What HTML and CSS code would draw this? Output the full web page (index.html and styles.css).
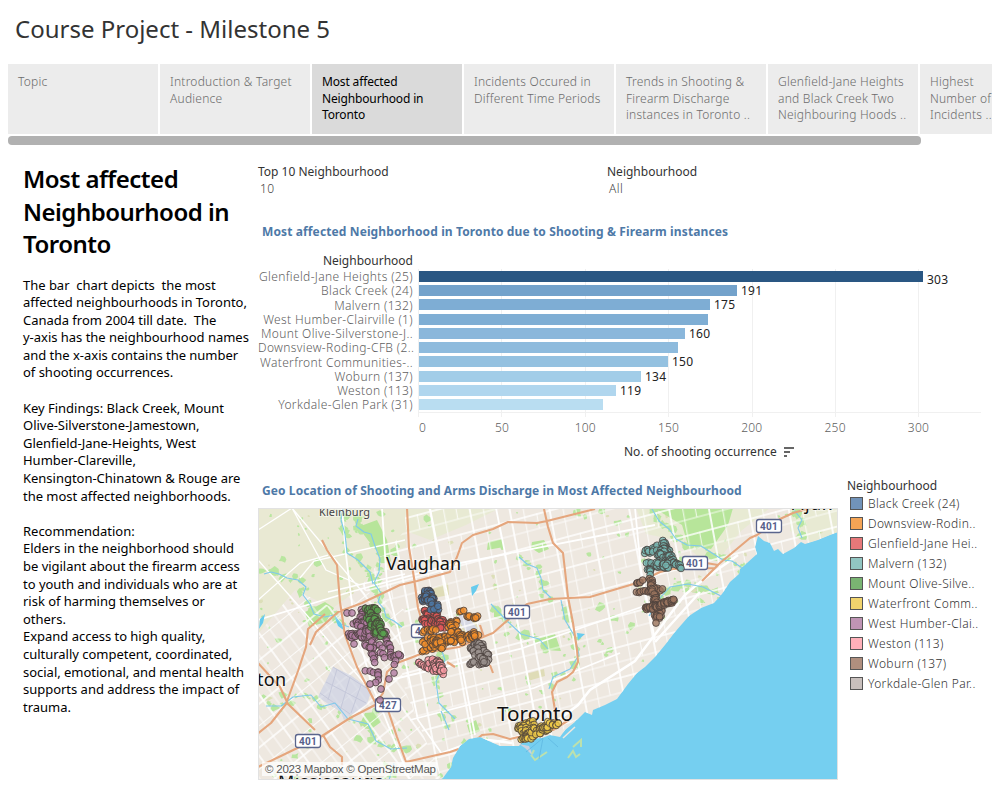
FILE: index.html
```html
<!DOCTYPE html>
<html lang="en">
<head>
<meta charset="utf-8">
<title>Course Project - Milestone 5</title>
<link rel="stylesheet" href="styles.css">
</head>
<body>
<h1 class="title">Course Project - Milestone 5</h1>
<nav class="tabs">
<div class="tab">Topic</div>
<div class="tab">Introduction &amp; Target<br>Audience</div>
<div class="tab active">Most affected<br>Neighbourhood in<br>Toronto</div>
<div class="tab">Incidents Occured in<br>Different Time Periods</div>
<div class="tab">Trends in Shooting &amp;<br>Firearm Discharge<br>instances in Toronto ..</div>
<div class="tab">Glenfield-Jane Heights<br>and Black Creek Two<br>Neighbouring Hoods ..</div>
<div class="tab">Highest<br>Number of<br>Incidents ..</div>
</nav>
<div class="scrollbar"></div>
<main class="main">
<aside class="story">
<h2>Most affected<br>Neighbourhood in<br>Toronto</h2>
<p>The bar  chart depicts  the most
affected neighbourhoods in Toronto,
Canada from 2004 till date.  The
y-axis has the neighbourhood names
and the x-axis contains the number
of shooting occurrences.

Key Findings: Black Creek, Mount
Olive-Silverstone-Jamestown,
Glenfield-Jane-Heights, West
Humber-Clareville,
Kensington-Chinatown &amp; Rouge are
the most affected neighborhoods.

Recommendation:
Elders in the neighborhood should
be vigilant about the firearm access
to youth and individuals who are at
risk of harming themselves or
others.
Expand access to high quality,
culturally competent, coordinated,
social, emotional, and mental health
supports and address the impact of
trauma.</p>
</aside>
<section class="content">
<div class="filters">
<div class="filter"><b>Top 10 Neighbourhood</b><span>10</span></div>
<div class="filter"><b>Neighbourhood</b><span>All</span></div>
</div>
<h3 class="bar-title">Most affected Neighborhood in Toronto due to Shooting &amp; Firearm instances</h3>
<div class="chart">
<div class="names"><div class="names-head">Neighbourhood</div><div class="name">Glenfield-Jane Heights (25)</div><div class="name">Black Creek (24)</div><div class="name">Malvern (132)</div><div class="name">West Humber-Clairville (1)</div><div class="name">Mount Olive-Silverstone-J..</div><div class="name">Downsview-Roding-CFB (2..</div><div class="name">Waterfront Communities-..</div><div class="name">Woburn (137)</div><div class="name">Weston (113)</div><div class="name">Yorkdale-Glen Park (31)</div></div>
<div class="plot-col">
<svg class="plot" width="563" height="149" viewBox="418 269 563 149">
<path class="grid" d="M418.5 269v148M501.5 269v148M585.5 269v148M668.5 269v148M752.5 269v148M835.5 269v148M918.5 269v148M418 412.5h563"/>
<g class="bars">
<rect x="419" y="271" width="504" height="11" fill="#2a5783"/>
<rect x="419" y="285" width="318" height="11" fill="#73a2cb"/>
<rect x="419" y="299" width="291" height="11" fill="#7eadd4"/>
<rect x="419" y="314" width="289" height="11" fill="#7faed4"/>
<rect x="419" y="328" width="266" height="11" fill="#8ab7db"/>
<rect x="419" y="342" width="259" height="11" fill="#8ebbdd"/>
<rect x="419" y="356" width="249" height="11" fill="#94c1e0"/>
<rect x="419" y="371" width="222" height="11" fill="#a2cde8"/>
<rect x="419" y="385" width="197" height="11" fill="#b0d6ee"/>
<rect x="419" y="399" width="184" height="11" fill="#b9ddf1"/>
</g>
<g class="values"><text x="927" y="284">303</text><text x="741" y="295">191</text><text x="714" y="309">175</text><text x="689" y="338">160</text><text x="672" y="366">150</text><text x="645" y="381">134</text><text x="620" y="395">119</text></g>
</svg>
<div class="ticks"><span>0</span><span>50</span><span>100</span><span>150</span><span>200</span><span>250</span><span>300</span></div>
<div class="axis"><span>No. of shooting occurrence</span><svg width="11" height="10"><path d="M0 0h10v2H0zM0 4h6v2H0zM0 8h3v2H0z" fill="#666"/></svg></div>
</div>
</div>
<div class="lower">
<div>
<h3 class="map-title">Geo Location of Shooting and Arms Discharge in Most Affected Neighbourhood</h3>
<svg class="map" width="580" height="272" viewBox="258 508 580 272">
<defs>
<pattern id="east" width="38" height="31" patternUnits="userSpaceOnUse" patternTransform="translate(440 570) skewY(-15) skewX(10)"><path d="M0 1H38M1 0V31" stroke="#fff" stroke-width="1.6"/><path d="M0 16H38M14 0V31M26 0V16" stroke="#fff" stroke-width=".8"/></pattern>
<pattern id="west" width="36" height="34" patternUnits="userSpaceOnUse" patternTransform="translate(270 650) rotate(-39) skewX(-3)"><path d="M0 1H36M1 0V34" stroke="#fff" stroke-width="1.5"/><path d="M0 18H36M12 0V34M24 0V34" stroke="#fff" stroke-width=".8"/></pattern>
<clipPath id="land"><path id="coast" d="M258 508H838V532L830 535 818 540 805 544 801 542 794 548 783 554 778 549 774 551 770 543 764 541 758 536 755 547 757 554 747 563 740 569 739 574 730 582 722 594 714 603 701 608 689 616 675 632 665 645 655 657 645 667 637 673 628 684 617 699 605 705 593 710 592 715 585 712 578 719 568 726 560 737 550 735 542 738 525 739 519 746 500 746 480 737 469 739 460 746 453 758 451 767 443 778 440 780H258Z"/></clipPath>
</defs>
<rect x="258" y="508" width="580" height="272" fill="#75cff0"/>
<use href="#coast" fill="#eee8e0"/>
<g clip-path="url(#land)">
<path d="M258 508H405L406 547 384 555 360 588 333 608 295 590 258 634Z" fill="#e9e9d3"/>
<path d="M405 508H500L466 525 430 540 406 531ZM636 508H770L741 531 720 558 700 558 680 541 646 534ZM790 508H838V532L811 542 790 531Z" fill="#e8ead3"/>
<g id="greens"></g>
<path d="M358 527L377 520 387 540 391 562 374 548ZM654 508H733L728 525 711 549 688 545 682 525ZM365 713 376 712 381 722 370 730 360 724ZM305 612 325 602 334 608 326 622 309 627ZM488 542 502 539 504 547 487 550ZM532 542 544 540 549 549 539 553 531 548ZM467 725 476 720 480 731 470 735ZM494 610 505 615 504 620 494 617ZM537 638 555 634 561 651 545 650Z" fill="#b7e59a"/>
<path d="M428 590L448 583 449 595 428 599ZM458 620 475 618 480 633 466 637ZM526 674 544 669 545 676 528 681Z" fill="#dfdcb7"/>
<path d="M333 667L350 675 357 680 371 691 367 704 344 720 341 712 318 697ZM457 618 465 612 477 628 479 638 467 633Z" fill="#d6d8e3"/>
<path d="M258 634L295 590 333 608 360 588 405 610 398 650 405 690 442 780H258Z" fill="url(#west)"/>
<path d="M333 608L360 588 384 555 405 530 405 508H838V780H442L405 690 398 650 405 610 360 588Z" fill="url(#east)"/>
<path d="M258 530L292 508 365 595M258 600L300 563 328 555M292 508 326 570 360 585M258 560 305 613 370 690M300 578 314 561 405 540M328 592 405 574" class="road"/>
<path d="M342 508L346 555 354 620 371 682 410 780M382 508 387 585 403 650 418 720 442 754M430 508 440 560 457 640 475 735M496 508 508 568 519 630 534 710M635 508 641 570 655 640M258 620L350 592 450 565 655 525M390 680 520 649 650 604M410 720 534 688 620 653" class="main-road"/>
<path d="M738 555C725 565 700 580 684 596L635 661 590 690 578 705 545 730M700 592 655 642M440 754 480 739 512 743" class="main-road wide"/>
<path d="M333 667L350 675 357 680 371 691 367 704 344 720 341 712 318 697Z" fill="#d6d8e3" fill-opacity=".8"/>
<path d="M333 667L371 691M320 693 350 714M326 682 366 703M337 669 328 700M350 677 340 711M361 685 351 713" class="airport"/>
<g id="creeks">
<path class="creek" d="M264 574l7-2 8 2 8 4 11 2 8 7-3 8 7 9 4 10 11 3 9-2 7 9 8 3"/>
<path class="creek" d="M358 519l-2 7 8 6 7 2 4 12 5 13-1 13-5 11 7 10-3 9 6 7 2 8 8 4 8 6"/>
<path class="creek" d="M343 508l-2 12 4 14 2 19 11 7 12 12 3 12"/>
<path class="creek" d="M519 557l8 7 10 4 4 10 2 12 8 8M561 600l4 20 10 17 4 18-9 14-17 8-4 12"/>
<path class="creek" d="M652 509l7 12 10 8 7 10 11 6 14 1 11 7 11 7 9 1 13 9"/>
<path class="creek" d="M721 596l-18-9-15-3-18 3-11 12-10 17M802 538l-4-10 4-8-8-10"/>
<path class="creek" d="M266 706l15 0 12-9 18-2 10 12 14-4 13 16 20 5 8 17 15 8 16-1"/>
<path class="creek" d="M420 622l4 14 16 10 5 14-9 22 3 21 16 16M491 604l15 16 15 14 18 5 9 10M394 763l-5 17M441 711l8 19"/>
</g>
<path class="lake" d="M260 619l5-5-2 9-4 6zM471 587l8-3-3 7-4 5zM335 618l6 5 4 8-7-5zM577 633l8 1-7 6z"/>
<path class="highway" d="M322 540l5 10 10 15 3 37 5 33 12 32 18 35 13 8 9 27 9 25 44-10 20-7 12-10 11-1 17 5 17-4 26-5 16-10M595 509l-48 12-10 2-29-1-15 7-20 6-11 8-5 14-7 15-33 9-17 4-38 18-24 9-22 20-6 13M325 614l-17 15-2 18-8 24-12 33-15 19-15 12M258 663l22 24 8 17 27 26M258 767l25-12 39-19 28-18 25-13 8-12 4-21 10-9 16-6 10-4 36-6 24-10 10-4 17-15 17-14 23-5 20-1 20-1 30-9 17-5 23-11 13-3 42-1 5-5 30-25 7-3 23-16 13-6 25-7M407 508l2 40 5 30 4 30 5 16M544 509l4 18 5 16 10 10 5 44 5 26 4 27 1 12-5 10-6 5-10 5-5 10 3 18 3 15M323 735l7 12 12 10v8M702 581l16-16-12-2M480 625l4 12M490 665l3 8M447 662l8 5"/>
</g>
<path d="M519 744l10 2 4 10-8-8z" fill="#ccd2df"/><path d="M531 755l4 5 12-8M532 754l2-4M568 758l5-7 3 6 4-3M573 747l8-7 0 7" class="island"/><path d="M559 734l16-13M563 738l12-11" class="pier"/>
<path d="M543 738l-17 14M543 738l-4 21M548 738l10 9" class="ferry"/>
<g class="place"><text x="319" y="516" class="small" textLength="51">Kleinburg</text><text x="386" y="570" textLength="75">Vaughan</text><text x="497" y="721" textLength="76" lengthAdjust="spacingAndGlyphs" class="toronto">Toronto</text><text x="257" y="686" textLength="29">ton</text><text x="278" y="788" textLength="106">Mississauga</text><text x="792" y="510" textLength="40">Ajax</text></g>
<g id="shields"></g>
<g id="dots"></g>
<rect x="262" y="762" width="175" height="14" fill="#fff" fill-opacity=".72"/><text x="265" y="773" textLength="171" class="credit">© 2023 Mapbox © OpenStreetMap</text>
<rect x="258.5" y="508.5" width="579" height="271" fill="none" stroke="#e2e2e2"/>
</svg>
</div>
<div class="legend"><b>Neighbourhood</b>
<div><i class="c-blue"></i>Black Creek (24)</div>
<div><i class="c-orange"></i>Downsview-Rodin..</div>
<div><i class="c-red"></i>Glenfield-Jane Hei..</div>
<div><i class="c-teal"></i>Malvern (132)</div>
<div><i class="c-green"></i>Mount Olive-Silve..</div>
<div><i class="c-yellow"></i>Waterfront Comm..</div>
<div><i class="c-purple"></i>West Humber-Clai..</div>
<div><i class="c-pink"></i>Weston (113)</div>
<div><i class="c-brown"></i>Woburn (137)</div>
<div><i class="c-grey"></i>Yorkdale-Glen Par..</div>
</div>
</div>
</section>
</main>
<script src="map.js"></script>
</body>
</html>
```
FILE: styles.css
```css
body{margin:0;width:1000px;height:800px;overflow:hidden;background:#fff;font-family:"Noto Sans","Open Sans",sans-serif;font-size:12px;color:#333}
.title{margin:0;padding:12px 0 0 15px;height:52px;font-size:24px;line-height:34px;font-weight:400;letter-spacing:0}
.tabs{display:flex;gap:2px;width:984px;margin-left:8px;height:70px;overflow:hidden}
.tab{flex:0 0 150px;box-sizing:border-box;background:#ececec;padding:10px 0 0 10px;line-height:16.5px;font-size:12px;letter-spacing:.23px;font-weight:300;color:#6b6b6b;white-space:nowrap}
.tab.active{background:#dadada;color:#000;font-weight:400;letter-spacing:-.15px}
.scrollbar{width:913px;height:9px;margin:2px 0 0 8px;border-radius:4px;background:#b1b1b1}
.main{display:flex}
.story{width:235px;padding:18px 0 0 23px;box-sizing:content-box;white-space:nowrap;color:#000}
.story h2{margin:0;font-size:24px;line-height:32.5px;font-weight:600;letter-spacing:-.5px}
.story p{margin:16px 0 0;font-size:13px;line-height:17.6px;white-space:pre;font-weight:400;letter-spacing:-.02px}
.content{width:742px}
.filters{display:flex;padding-top:18px;height:48px}
.filter{width:349px;display:flex;flex-direction:column;line-height:17px}
.filter b,.legend b{font-weight:400;font-size:12px;letter-spacing:0}
.filter span{padding-left:2px;color:#444;font-weight:300;letter-spacing:.5px}
h3{margin:0;color:#4e79a7;font-size:12px;font-weight:700;line-height:18px;white-space:nowrap}
.bar-title{padding:12px 0 0 4px;letter-spacing:.12px}
.chart{display:flex;padding-top:12px;height:229px}
.names{width:160px;text-align:right;white-space:nowrap}
.names-head{font-size:12px;line-height:16px;font-weight:400;letter-spacing:0;padding:0 5px 1px 0}
.name{height:14.28px;line-height:14.28px;padding-right:5px;color:#606060;font-weight:300;font-size:12px;letter-spacing:.36px}
.plot-col{width:563px;padding-top:16px}
.plot{display:block;overflow:visible}
.grid{fill:none;stroke:#f0f0f0}
.values{font-size:12px;fill:#222;letter-spacing:.2px}
.ticks{display:flex;color:#606060;font-weight:300;letter-spacing:.2px;line-height:16px;margin:2px 0 0 -41px}
.ticks span{width:83.3px;text-align:center}
.ticks span:first-child{padding-left:8px;box-sizing:border-box}
.axis{display:flex;align-items:center;gap:7px;margin:8px 0 0 206px;line-height:16px;font-weight:400;letter-spacing:0;white-space:nowrap}
.lower{display:flex;gap:9px}
.map-title{padding:0 0 8px 4px;letter-spacing:.1px}
.map{display:block}
.road{fill:none;stroke:#fff;stroke-width:1.3}
.main-road{fill:none;stroke:#fff;stroke-width:1.8}.wide{stroke-width:2.5}
.airport{fill:none;stroke:#c5c8da}
.creek{fill:none;stroke:#7fc9ec;stroke-width:1.1;stroke-linejoin:round}
.lake{fill:#67cbed}
.highway{fill:none;stroke:#e5a67d;stroke-width:2.1;stroke-linejoin:round}
.island{fill:none;stroke:#bce1ad;stroke-width:2}.pier{fill:none;stroke:#eee8e0;stroke-width:1.6}.ferry{fill:none;stroke:#5bb4df;stroke-width:.7}
.place{font-size:18px;fill:#111;stroke:#fff;stroke-opacity:.45;stroke-width:2px;paint-order:stroke}
.place .small{font-size:11px;fill:#444}
.place .toronto{font-size:20px}
.shield rect{fill:#fff;stroke:#5a658d;stroke-width:1.3}
.shield text{font:700 10px Roboto,sans-serif;fill:#56608a;text-anchor:middle;letter-spacing:.3px}
.credit{font:11.5px "Liberation Sans",sans-serif;fill:#555}
.legend{padding-top:0;white-space:nowrap}
.legend b{display:block;line-height:12px;margin-top:-2px;padding-bottom:1px}
.legend div{display:flex;align-items:center;height:20px;font-size:12px;letter-spacing:.35px;font-weight:300;color:#333}
.legend i{box-sizing:border-box;width:13px;height:13px;border:1px solid #555;margin:0 5px 0 3px}
.c-blue{background:#7193b9}.c-orange{background:#f5a455}.c-red{background:#e77879}.c-teal{background:#91c5c1}.c-green{background:#7ab472}.c-yellow{background:#f1d36d}.c-purple{background:#bf94b4}.c-pink{background:#ffb0b9}.c-brown{background:#b08f7e}.c-grey{background:#c8bfbc}
```
FILE: map.js
```js
const NS = "http://www.w3.org/2000/svg";
let seed = 71;
const rnd = () => (seed = (seed * 16807) % 2147483647) / 2147483647;
function add(parent, tag, attrs, text) {
  const e = document.createElementNS(NS, tag);
  for (const k in attrs) e.setAttribute(k, attrs[k]);
  if (text) e.textContent = text;
  parent.appendChild(e);
  return e;
}

// Parks are angular blobs, scattered and strung along the creeks.
const greens = document.getElementById("greens");
function park(x, y, r, fill) {
  let d = "";
  for (let k = 0; k < 7; k++) {
    const a = k * 0.9, q = r * (0.4 + rnd() * 0.7);
    d += (k ? "L" : "M") + (x + Math.cos(a) * q).toFixed(1) + " " + (y + Math.sin(a) * q * 0.9).toFixed(1);
  }
  add(greens, "path", { d: d + "Z", fill });
}
for (let i = 0; i < 330; i++)
  park(260 + rnd() * 570, 510 + rnd() * 270, 1.2 + rnd() * rnd() * 6, rnd() < 0.8 ? "#b9e6a0" : "#dcdfb8");
for (const creek of document.querySelectorAll("#creeks path"))
  for (let s = 0; s < creek.getTotalLength(); s += 5) {
    const p = creek.getPointAtLength(s);
    park(p.x + (rnd() - 0.5) * 6, p.y + (rnd() - 0.5) * 6, 1.5 + rnd() * 5, "#b9e6a0");
  }

for (const [x, y, n] of [[411, 624, 401], [504, 605, 401], [295, 734, 401], [375, 698, 427], [682, 556, 401], [756, 519, 401]]) {
  const g = add(document.getElementById("shields"), "g", { class: "shield" });
  add(g, "rect", { x: x + 0.5, y: y + 0.5, width: 25, height: 13, rx: 2.5 });
  add(g, "text", { x: x + 13, y: y + 10.7 }, String(n));
}

// Each cluster: colour, then strokes of [x1, y1, x2, y2, spread, count].
const clusters = [
  ["#b07aa1", [[347, 613, 352, 613, 0, 2], [363, 609, 360, 623, 3, 14], [354, 623, 371, 622, 2, 12], [348, 636, 374, 635, 3, 25], [358, 629, 376, 634, 4, 24], [374, 640, 372, 656, 3, 9], [354, 644, 354, 644, 0, 1], [365, 645, 370, 648, 1, 4], [385, 633, 390, 653, 2, 12], [373, 655, 375, 663, 1, 3], [380, 646, 384, 656, 2, 5], [391, 657, 401, 655, 1, 6], [398, 655, 395, 665, 1, 3], [394, 673, 389, 679, 0, 2], [365, 671, 378, 672, 1, 4], [378, 672, 376, 681, 2, 5], [370, 684, 370, 684, 0, 1], [381, 689, 380, 700, 0, 2]]],
  ["#59a14f", [[365, 609, 378, 610, 2, 14], [371, 614, 379, 633, 5, 55], [376, 620, 384, 633, 2, 18]]],
  ["#e15759", [[425, 612, 431, 612, 2, 10], [430, 614, 431, 626, 4, 30], [424, 621, 443, 622, 3, 26], [438, 615, 443, 628, 3, 16]]],
  ["#4e79a7", [[424, 592, 431, 592, 2, 12], [421, 599, 434, 599, 3, 20], [428, 598, 435, 608, 5, 32]]],
  ["#f28e2b", [[459, 612, 464, 610, 1, 3], [466, 615, 477, 617, 2, 8], [477, 617, 476, 618, 1, 2], [424, 631, 435, 629, 2, 8], [424, 649, 435, 645, 3, 13], [425, 641, 459, 638, 4, 36], [434, 640, 442, 645, 5, 25], [449, 625, 456, 622, 3, 12], [453, 623, 453, 641, 4, 25], [459, 633, 461, 642, 3, 12], [468, 636, 477, 637, 3, 14], [474, 632, 474, 636, 1, 4]]],
  ["#9c9490", [[470, 646, 483, 646, 3, 14], [478, 643, 488, 655, 3, 18], [470, 664, 474, 662, 1, 4], [480, 663, 488, 661, 2, 9], [475, 650, 483, 662, 4, 16]]],
  ["#ff9da7", [[418, 662, 429, 669, 1, 9], [430, 661, 439, 662, 3, 16], [431, 667, 442, 673, 3, 20], [440, 662, 442, 671, 2, 12]]],
  ["#76b7b2", [[646, 552, 656, 547, 3, 13], [663, 543, 667, 552, 4, 22], [657, 554, 669, 558, 5, 32], [649, 565, 675, 561, 4, 32], [649, 568, 650, 573, 2, 8], [667, 555, 680, 567, 2, 20], [659, 565, 667, 566, 3, 14]]],
  ["#9c755f", [[636, 584, 642, 581, 1, 5], [637, 592, 645, 591, 1, 5], [648, 591, 661, 589, 2, 12], [651, 578, 653, 590, 2, 12], [653, 593, 660, 614, 3, 35], [645, 609, 662, 606, 2, 22], [661, 604, 675, 600, 2, 22], [653, 616, 661, 618, 2, 7], [656, 623, 656, 623, 0, 1]]],
  ["#edc948", [[520, 726, 532, 723, 3, 22], [521, 729, 535, 735, 4, 28], [522, 738, 531, 737, 2, 12], [532, 730, 548, 728, 3, 25], [537, 733, 551, 725, 3, 20], [549, 723, 557, 725, 2, 7]]]
];
const dots = document.getElementById("dots");
for (const [fill, strokes] of clusters)
  for (const [x1, y1, x2, y2, s, n] of strokes)
    for (let i = 0; i < n; i++) {
      const t = n > 1 ? i / (n - 1) : 0;
      add(dots, "circle", {
        cx: (x1 + (x2 - x1) * t + (rnd() - 0.5) * s * 1.8).toFixed(1),
        cy: (y1 + (y2 - y1) * t + (rnd() - 0.5) * s * 1.8).toFixed(1),
        r: 3.4, fill, "fill-opacity": 0.8, stroke: "#493f3b", "stroke-opacity": 0.8, "stroke-width": 1
      });
    }
```
